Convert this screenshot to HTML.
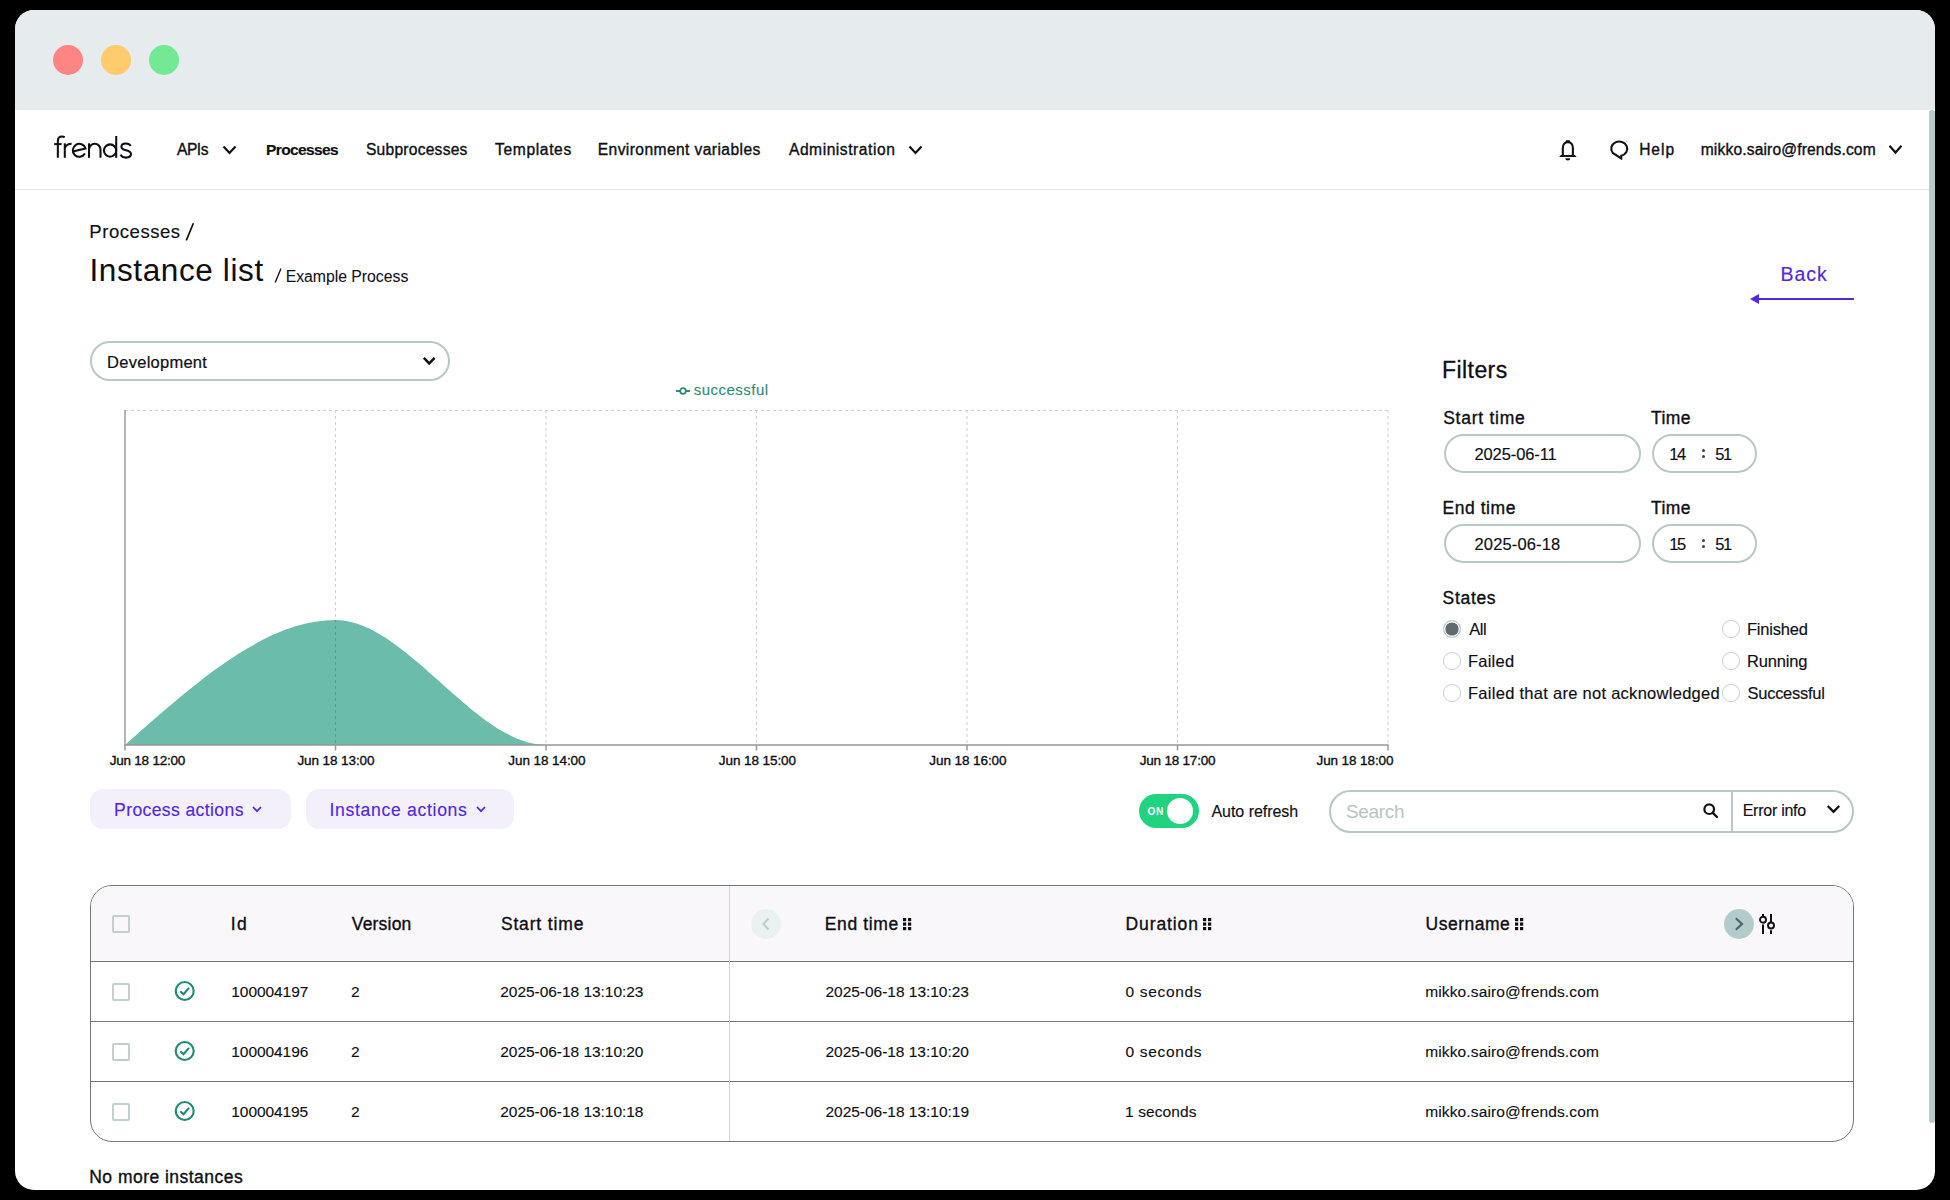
<!DOCTYPE html>
<html><head><meta charset="utf-8"><title>Instance list</title>
<style>
html,body{margin:0;padding:0;}
body{width:1950px;height:1200px;background:#000;position:relative;overflow:hidden;font-family:"Liberation Sans",sans-serif;}
.t{position:absolute;white-space:nowrap;line-height:1;}
.b{position:absolute;box-sizing:border-box;}
svg{position:absolute;overflow:visible;}
#win{position:absolute;left:15px;top:10px;width:1920px;height:1180px;border-radius:19px;overflow:hidden;background:#fff;}
</style></head><body>
<div id="win"></div>
<div class="b" style="left:15px;top:10px;width:1920px;height:100px;background:#e6ebee;border-radius:19px 19px 0 0;"></div>
<div class="b" style="left:53px;top:45px;width:30px;height:30px;background:#ff8585;border-radius:50%;"></div>
<div class="b" style="left:101px;top:45px;width:30px;height:30px;background:#ffcb6b;border-radius:50%;"></div>
<div class="b" style="left:149px;top:45px;width:30px;height:30px;background:#74e994;border-radius:50%;"></div>
<div class="b" style="left:15px;top:189px;width:1914px;height:1px;background:#e1e6e7;"></div>
<div class="b" style="left:1929px;top:110px;width:6px;height:1013px;background:#b3cbca;border-radius:3px;"></div>
<svg style="left:50px;top:130px" width="90" height="32" viewBox="0 0 90 32"><g fill="none" stroke="#0e0e14" stroke-width="2.05"><path d="M7.85 27.8 L7.85 11 C7.85 8 9.6 6.5 12 6.5 C13.1 6.5 14 6.8 14.7 7.4"/><path d="M4.2 14.1 L11.6 14.1"/><path d="M14.8 13.3 L14.8 27.8"/><path d="M14.8 18 C15.9 15.2 18.4 13.7 21.6 13.7"/><path d="M22.75 21.6 L35.5 18.4 A6.5 6.5 0 1 0 34.9 23.6"/><path d="M39 27.8 L39 13.3"/><path d="M39 19.5 A5.75 5.75 0 0 1 50.5 19.5 L50.5 27.8"/><circle cx="60.1" cy="20.5" r="6.15"/><path d="M66.2 6 L66.2 27.8"/><path d="M80.7 15.9 C79.9 14.3 78.2 13.4 75.9 13.4 C73.1 13.4 71.4 14.8 71.4 16.7 C71.4 18.9 73.6 19.6 76 20.2 C79 20.9 81 21.9 81 24.1 C81 26.3 78.8 27.6 75.9 27.6 C73.3 27.6 71.4 26.6 70.6 24.7"/></g></svg>
<div class="t" style="left:176.94px;top:141.99px;font-size:15.6px;color:#0e0e14;-webkit-text-stroke:0.35px #0e0e14;letter-spacing:-0.458px;">APIs</div>
<svg style="left:222px;top:145px" width="16" height="10" viewBox="0 0 16 10"><polyline points="1.5,1.5 7.5,8 13.5,1.5" fill="none" stroke="#111" stroke-width="2.2"/></svg>
<div class="t" style="left:266.00px;top:142.08px;font-size:15.5px;color:#0e0e14;font-weight:700;-webkit-text-stroke:0.15px #0e0e14;letter-spacing:-0.617px;">Processes</div>
<div class="t" style="left:365.91px;top:141.99px;font-size:15.6px;color:#0e0e14;-webkit-text-stroke:0.35px #0e0e14;letter-spacing:0.241px;">Subprocesses</div>
<div class="t" style="left:495.02px;top:141.99px;font-size:15.6px;color:#0e0e14;-webkit-text-stroke:0.35px #0e0e14;letter-spacing:0.644px;">Templates</div>
<div class="t" style="left:597.75px;top:141.99px;font-size:15.6px;color:#0e0e14;-webkit-text-stroke:0.35px #0e0e14;letter-spacing:0.412px;">Environment variables</div>
<div class="t" style="left:788.94px;top:141.99px;font-size:15.6px;color:#0e0e14;-webkit-text-stroke:0.35px #0e0e14;letter-spacing:0.543px;">Administration</div>
<svg style="left:908px;top:145px" width="16" height="10" viewBox="0 0 16 10"><polyline points="1.5,1.5 7.5,8 13.5,1.5" fill="none" stroke="#111" stroke-width="2.2"/></svg>
<svg style="left:1558px;top:139px" width="20" height="22" viewBox="0 0 20 22"><rect x="7.9" y="1.2" width="3.9" height="2.8" fill="#111"/><path d="M4.8 16.2 L4.8 9.2 C4.8 5.1 6.9 3.1 9.85 3.1 C12.8 3.1 14.9 5.1 14.9 9.2 L14.9 16.2" fill="none" stroke="#111" stroke-width="2.1"/><polygon points="1.2,17.9 18.6,17.9 17,16 2.8,16" fill="#111"/><path d="M7.3 19.3 L12.3 19.3 A2.5 2.3 0 0 1 7.3 19.3 Z" fill="#111"/></svg>
<svg style="left:1609px;top:140px" width="22" height="20" viewBox="0 0 22 20"><path d="M3.7 12.9 A8 7.2 0 1 1 12.3 15.7 L12.2 18.4 Z" fill="none" stroke="#111" stroke-width="2.1" stroke-linejoin="miter"/></svg>
<div class="t" style="left:1639.15px;top:141.99px;font-size:15.6px;color:#0e0e14;-webkit-text-stroke:0.35px #0e0e14;letter-spacing:0.950px;">Help</div>
<div class="t" style="left:1700.74px;top:141.99px;font-size:15.6px;color:#0e0e14;-webkit-text-stroke:0.35px #0e0e14;letter-spacing:0.149px;">mikko.sairo@frends.com</div>
<svg style="left:1888px;top:144px" width="16" height="11" viewBox="0 0 16 11"><polyline points="1.5,1.8 7.5,8.5 13.5,1.8" fill="none" stroke="#111" stroke-width="2.2"/></svg>
<div class="t" style="left:89.30px;top:223.34px;font-size:18.5px;color:#0e0e14;-webkit-text-stroke:0.15px #0e0e14;letter-spacing:0.552px;">Processes</div>
<svg style="left:180px;top:220px" width="20" height="24" viewBox="0 0 20 24"><line x1="6.3" y1="20.4" x2="13.4" y2="3.2" stroke="#111" stroke-width="1.7"/></svg>
<div class="t" style="left:89.42px;top:254.94px;font-size:31.5px;color:#0e0e14;-webkit-text-stroke:0.05px #0e0e14;letter-spacing:0.618px;">Instance list</div>
<svg style="left:270px;top:265px" width="16" height="20" viewBox="0 0 16 20"><line x1="5.2" y1="17.6" x2="11" y2="3.4" stroke="#16161c" stroke-width="1.35"/></svg>
<div class="t" style="left:285.69px;top:268.63px;font-size:15.8px;color:#0e0e14;-webkit-text-stroke:0.05px #0e0e14;letter-spacing:-0.023px;">Example Process</div>
<div class="t" style="left:1780.44px;top:265.19px;font-size:19.5px;color:#5327dd;-webkit-text-stroke:0.15px #5327dd;letter-spacing:0.963px;">Back</div>
<svg style="left:1749px;top:293px" width="107" height="12" viewBox="0 0 107 12"><path d="M9 6 L105 6" stroke="#5327dd" stroke-width="2.2"/><path d="M1 6 L10 1 L10 11 Z" fill="#5327dd"/></svg>
<div class="b" style="left:90px;top:341px;width:360px;height:40px;border:2px solid #b9c8c6;border-radius:20px;"></div>
<div class="t" style="left:107.12px;top:354.23px;font-size:16.5px;color:#0e0e14;-webkit-text-stroke:0.2px #0e0e14;letter-spacing:0.255px;">Development</div>
<svg style="left:422px;top:356px" width="15" height="10" viewBox="0 0 15 10"><polyline points="1.8,1.8 7.2,7.4 12.6,1.8" fill="none" stroke="#111" stroke-width="2.4"/></svg>
<svg style="left:0;top:0" width="1950" height="1200" viewBox="0 0 1950 1200"><line x1="125" y1="410.5" x2="1388" y2="410.5" stroke="#cfcfcf" stroke-width="1" stroke-dasharray="3 3"/><line x1="335.5" y1="410" x2="335.5" y2="745" stroke="#cfcfcf" stroke-width="1" stroke-dasharray="3 3"/><line x1="546" y1="410" x2="546" y2="745" stroke="#cfcfcf" stroke-width="1" stroke-dasharray="3 3"/><line x1="756.5" y1="410" x2="756.5" y2="745" stroke="#cfcfcf" stroke-width="1" stroke-dasharray="3 3"/><line x1="967" y1="410" x2="967" y2="745" stroke="#cfcfcf" stroke-width="1" stroke-dasharray="3 3"/><line x1="1177.5" y1="410" x2="1177.5" y2="745" stroke="#cfcfcf" stroke-width="1" stroke-dasharray="3 3"/><line x1="1388" y1="410" x2="1388" y2="745" stroke="#cfcfcf" stroke-width="1" stroke-dasharray="3 3"/><path d="M125,745 C195.17,682.50 265.33,620 335.5,620 C405.67,620 475.83,745 546,745 L125,745 Z" fill="#6bbcaa"/><line x1="335.5" y1="620" x2="335.5" y2="745" stroke="#5a9e8f" stroke-width="1" stroke-dasharray="3 3"/><line x1="125" y1="410" x2="125" y2="745" stroke="#959595" stroke-width="1.4"/><line x1="124.5" y1="745" x2="1388.5" y2="745" stroke="#959595" stroke-width="1.4"/><line x1="125" y1="745" x2="125" y2="750.5" stroke="#9a9a9a" stroke-width="1.5"/><line x1="335.5" y1="745" x2="335.5" y2="750.5" stroke="#9a9a9a" stroke-width="1.5"/><line x1="546" y1="745" x2="546" y2="750.5" stroke="#9a9a9a" stroke-width="1.5"/><line x1="756.5" y1="745" x2="756.5" y2="750.5" stroke="#9a9a9a" stroke-width="1.5"/><line x1="967" y1="745" x2="967" y2="750.5" stroke="#9a9a9a" stroke-width="1.5"/><line x1="1177.5" y1="745" x2="1177.5" y2="750.5" stroke="#9a9a9a" stroke-width="1.5"/><line x1="1388" y1="745" x2="1388" y2="750.5" stroke="#9a9a9a" stroke-width="1.5"/></svg>
<svg style="left:675px;top:386px" width="16" height="10" viewBox="0 0 16 10"><line x1="1" y1="5" x2="15" y2="5" stroke="#2a8c76" stroke-width="2"/><circle cx="8" cy="5" r="2.8" fill="#fff" stroke="#2a8c76" stroke-width="1.8"/></svg>
<div class="t" style="left:693.86px;top:381.80px;font-size:15px;color:#2a8c76;-webkit-text-stroke:0.1px #2a8c76;letter-spacing:0.460px;">successful</div>
<div class="t" style="left:109.81px;top:754.27px;font-size:13.5px;color:#0e0e14;-webkit-text-stroke:0.35px #0e0e14;letter-spacing:-0.243px;">Jun 18 12:00</div>
<div class="t" style="left:297.41px;top:754.27px;font-size:13.5px;color:#0e0e14;-webkit-text-stroke:0.35px #0e0e14;letter-spacing:-0.089px;">Jun 18 13:00</div>
<div class="t" style="left:508.31px;top:754.27px;font-size:13.5px;color:#0e0e14;-webkit-text-stroke:0.35px #0e0e14;letter-spacing:-0.080px;">Jun 18 14:00</div>
<div class="t" style="left:718.81px;top:754.27px;font-size:13.5px;color:#0e0e14;-webkit-text-stroke:0.35px #0e0e14;letter-spacing:-0.080px;">Jun 18 15:00</div>
<div class="t" style="left:929.31px;top:754.27px;font-size:13.5px;color:#0e0e14;-webkit-text-stroke:0.35px #0e0e14;letter-spacing:-0.080px;">Jun 18 16:00</div>
<div class="t" style="left:1139.81px;top:754.27px;font-size:13.5px;color:#0e0e14;-webkit-text-stroke:0.35px #0e0e14;letter-spacing:-0.216px;">Jun 18 17:00</div>
<div class="t" style="left:1316.51px;top:754.27px;font-size:13.5px;color:#0e0e14;-webkit-text-stroke:0.35px #0e0e14;letter-spacing:-0.098px;">Jun 18 18:00</div>
<div class="t" style="left:1442.12px;top:358.53px;font-size:23px;color:#0e0e14;-webkit-text-stroke:0.3px #0e0e14;letter-spacing:0.410px;">Filters</div>
<div class="t" style="left:1443.19px;top:410.29px;font-size:17.5px;color:#0e0e14;-webkit-text-stroke:0.35px #0e0e14;letter-spacing:0.750px;">Start time</div>
<div class="t" style="left:1651.03px;top:410.29px;font-size:17.5px;color:#0e0e14;-webkit-text-stroke:0.35px #0e0e14;letter-spacing:0.446px;">Time</div>
<div class="b" style="left:1443.5px;top:433.5px;width:197.5px;height:39.5px;border:2px solid #b9c8c6;border-radius:20px;"></div>
<div class="b" style="left:1651.5px;top:433.5px;width:105px;height:39.5px;border:2px solid #b9c8c6;border-radius:20px;"></div>
<div class="t" style="left:1474.49px;top:446.03px;font-size:16.5px;color:#0e0e14;-webkit-text-stroke:0.15px #0e0e14;letter-spacing:-0.107px;">2025-06-11</div>
<div class="t" style="left:1669.35px;top:446.03px;font-size:16.5px;color:#0e0e14;-webkit-text-stroke:0.15px #0e0e14;letter-spacing:-1.500px;">14</div>
<div class="b" style="left:1702.3px;top:448.8px;width:3px;height:3px;background:#3f4343;border-radius:50%;"></div>
<div class="b" style="left:1702.3px;top:455.2px;width:3px;height:3px;background:#3f4343;border-radius:50%;"></div>
<div class="t" style="left:1715.31px;top:446.03px;font-size:16.5px;color:#0e0e14;-webkit-text-stroke:0.15px #0e0e14;letter-spacing:-1.500px;">51</div>
<div class="t" style="left:1442.56px;top:500.29px;font-size:17.5px;color:#0e0e14;-webkit-text-stroke:0.35px #0e0e14;letter-spacing:0.541px;">End time</div>
<div class="t" style="left:1651.03px;top:500.29px;font-size:17.5px;color:#0e0e14;-webkit-text-stroke:0.35px #0e0e14;letter-spacing:0.446px;">Time</div>
<div class="b" style="left:1443.5px;top:523.5px;width:197.5px;height:39.5px;border:2px solid #b9c8c6;border-radius:20px;"></div>
<div class="b" style="left:1651.5px;top:523.5px;width:105px;height:39.5px;border:2px solid #b9c8c6;border-radius:20px;"></div>
<div class="t" style="left:1474.49px;top:536.03px;font-size:16.5px;color:#0e0e14;-webkit-text-stroke:0.15px #0e0e14;letter-spacing:0.147px;">2025-06-18</div>
<div class="t" style="left:1669.35px;top:536.03px;font-size:16.5px;color:#0e0e14;-webkit-text-stroke:0.15px #0e0e14;letter-spacing:-1.500px;">15</div>
<div class="b" style="left:1702.3px;top:538.8px;width:3px;height:3px;background:#3f4343;border-radius:50%;"></div>
<div class="b" style="left:1702.3px;top:545.2px;width:3px;height:3px;background:#3f4343;border-radius:50%;"></div>
<div class="t" style="left:1715.31px;top:536.03px;font-size:16.5px;color:#0e0e14;-webkit-text-stroke:0.15px #0e0e14;letter-spacing:-1.500px;">51</div>
<div class="t" style="left:1442.59px;top:590.29px;font-size:17.5px;color:#0e0e14;-webkit-text-stroke:0.35px #0e0e14;letter-spacing:0.682px;">States</div>
<div class="b" style="left:1443.2px;top:620.2px;width:17.6px;height:17.6px;border:1.7px solid #c2d0cf;border-radius:50%;background:#5f6b6d;box-shadow:inset 0 0 0 1.4px #fff;"></div>
<div class="t" style="left:1469.34px;top:621.23px;font-size:16.5px;color:#0e0e14;-webkit-text-stroke:0.15px #0e0e14;letter-spacing:-0.494px;">All</div>
<div class="b" style="left:1443.2px;top:652.2px;width:17.6px;height:17.6px;border:1.7px solid #c2d0cf;border-radius:50%;"></div>
<div class="t" style="left:1468.03px;top:653.23px;font-size:16.5px;color:#0e0e14;-webkit-text-stroke:0.15px #0e0e14;letter-spacing:0.220px;">Failed</div>
<div class="b" style="left:1443.2px;top:684.2px;width:17.6px;height:17.6px;border:1.7px solid #c2d0cf;border-radius:50%;"></div>
<div class="t" style="left:1468.03px;top:685.23px;font-size:16.5px;color:#0e0e14;-webkit-text-stroke:0.15px #0e0e14;letter-spacing:0.277px;">Failed that are not acknowledged</div>
<div class="b" style="left:1722.2px;top:620.2px;width:17.6px;height:17.6px;border:1.7px solid #c2d0cf;border-radius:50%;"></div>
<div class="t" style="left:1746.92px;top:621.23px;font-size:16.5px;color:#0e0e14;-webkit-text-stroke:0.15px #0e0e14;letter-spacing:-0.177px;">Finished</div>
<div class="b" style="left:1722.2px;top:652.2px;width:17.6px;height:17.6px;border:1.7px solid #c2d0cf;border-radius:50%;"></div>
<div class="t" style="left:1746.92px;top:653.23px;font-size:16.5px;color:#0e0e14;-webkit-text-stroke:0.15px #0e0e14;letter-spacing:-0.144px;">Running</div>
<div class="b" style="left:1722.2px;top:684.2px;width:17.6px;height:17.6px;border:1.7px solid #c2d0cf;border-radius:50%;"></div>
<div class="t" style="left:1747.55px;top:685.23px;font-size:16.5px;color:#0e0e14;-webkit-text-stroke:0.15px #0e0e14;letter-spacing:-0.282px;">Successful</div>
<div class="b" style="left:90px;top:789px;width:201px;height:40px;background:#f3f0fc;border-radius:13px;"></div>
<div class="t" style="left:114.06px;top:801.70px;font-size:17.6px;color:#5327dd;-webkit-text-stroke:0.15px #5327dd;letter-spacing:0.371px;">Process actions</div>
<svg style="left:251px;top:805px" width="12" height="9" viewBox="0 0 12 9"><polyline points="2,2 6,6.2 10,2" fill="none" stroke="#5327dd" stroke-width="1.8"/></svg>
<div class="b" style="left:306px;top:789px;width:208px;height:40px;background:#f3f0fc;border-radius:13px;"></div>
<div class="t" style="left:329.38px;top:801.70px;font-size:17.6px;color:#5327dd;-webkit-text-stroke:0.15px #5327dd;letter-spacing:0.692px;">Instance actions</div>
<svg style="left:475px;top:805px" width="12" height="9" viewBox="0 0 12 9"><polyline points="2,2 6,6.2 10,2" fill="none" stroke="#5327dd" stroke-width="1.8"/></svg>
<div class="b" style="left:1139px;top:794px;width:60px;height:34px;background:#21d37e;border-radius:17px;"></div>
<div class="b" style="left:1167px;top:798px;width:26px;height:26px;background:#fff;border-radius:50%;"></div>
<div class="t" style="left:1147.62px;top:807.24px;font-size:10px;color:#ffffff;font-weight:700;letter-spacing:0.662px;">ON</div>
<div class="t" style="left:1211.44px;top:804.26px;font-size:16px;color:#0e0e14;-webkit-text-stroke:0.15px #0e0e14;letter-spacing:-0.033px;">Auto refresh</div>
<div class="b" style="left:1328.5px;top:790px;width:525px;height:42.5px;border:2px solid #b9c8c6;border-radius:22px;"></div>
<div class="b" style="left:1731px;top:791px;width:2px;height:40.5px;background:#b9c8c6;"></div>
<div class="t" style="left:1345.92px;top:802.12px;font-size:19px;color:#b7c4c2;letter-spacing:-0.332px;">Search</div>
<svg style="left:1702px;top:802px" width="18" height="18" viewBox="0 0 18 18"><circle cx="7.2" cy="7.2" r="4.8" fill="none" stroke="#111" stroke-width="2.2"/><line x1="10.8" y1="10.8" x2="15" y2="15" stroke="#111" stroke-width="2.4" stroke-linecap="round"/></svg>
<div class="t" style="left:1742.69px;top:802.76px;font-size:16px;color:#0e0e14;-webkit-text-stroke:0.15px #0e0e14;letter-spacing:-0.257px;">Error info</div>
<svg style="left:1826px;top:804px" width="15" height="11" viewBox="0 0 15 11"><polyline points="1.8,2 7.5,7.8 13.2,2" fill="none" stroke="#111" stroke-width="2.4"/></svg>
<div class="b" style="left:90px;top:885px;width:1764px;height:257px;border:1px solid #70777a;border-radius:22px;overflow:hidden;"></div>
<div class="b" style="left:91px;top:886px;width:1762px;height:75px;background:#f9f7fa;border-radius:21px 21px 0 0;"></div>
<div class="b" style="left:91px;top:961px;width:1762px;height:1px;background:#70777a;"></div>
<div class="b" style="left:91px;top:1021px;width:1762px;height:1px;background:#70777a;"></div>
<div class="b" style="left:91px;top:1081px;width:1762px;height:1px;background:#70777a;"></div>
<div class="b" style="left:729px;top:886px;width:1px;height:255px;background:#d3d5d6;"></div>
<div class="b" style="left:112px;top:915px;width:18px;height:18px;border:2px solid #c3cfce;border-radius:2px;"></div>
<div class="t" style="left:230.68px;top:915.99px;font-size:17.5px;color:#0e0e14;-webkit-text-stroke:0.35px #0e0e14;letter-spacing:1.500px;">Id</div>
<div class="t" style="left:351.74px;top:915.99px;font-size:17.5px;color:#0e0e14;-webkit-text-stroke:0.35px #0e0e14;letter-spacing:0.202px;">Version</div>
<div class="t" style="left:500.89px;top:915.99px;font-size:17.5px;color:#0e0e14;-webkit-text-stroke:0.35px #0e0e14;letter-spacing:0.850px;">Start time</div>
<div class="b" style="left:751px;top:909px;width:30px;height:30px;background:#eaf2f1;border-radius:50%;"></div>
<svg style="left:760px;top:917px" width="12" height="14" viewBox="0 0 12 14"><polyline points="8.5,1.5 3.5,7 8.5,12.5" fill="none" stroke="#b9cdcb" stroke-width="2"/></svg>
<div class="t" style="left:824.76px;top:915.99px;font-size:17.5px;color:#0e0e14;-webkit-text-stroke:0.35px #0e0e14;letter-spacing:0.641px;">End time</div>
<div class="t" style="left:1125.46px;top:915.99px;font-size:17.5px;color:#0e0e14;-webkit-text-stroke:0.35px #0e0e14;letter-spacing:0.911px;">Duration</div>
<div class="t" style="left:1425.53px;top:915.99px;font-size:17.5px;color:#0e0e14;-webkit-text-stroke:0.35px #0e0e14;letter-spacing:0.505px;">Username</div>
<svg style="left:902.5px;top:918.2px" width="8.5" height="12.5" viewBox="0 0 8.5 12.5"><rect x="0" y="0" width="3.2" height="3.2" fill="#111"/><rect x="0" y="4.5" width="3.2" height="3.2" fill="#111"/><rect x="0" y="9" width="3.2" height="3.2" fill="#111"/><rect x="5" y="0" width="3.2" height="3.2" fill="#111"/><rect x="5" y="4.5" width="3.2" height="3.2" fill="#111"/><rect x="5" y="9" width="3.2" height="3.2" fill="#111"/></svg>
<svg style="left:1203px;top:918.2px" width="8.5" height="12.5" viewBox="0 0 8.5 12.5"><rect x="0" y="0" width="3.2" height="3.2" fill="#111"/><rect x="0" y="4.5" width="3.2" height="3.2" fill="#111"/><rect x="0" y="9" width="3.2" height="3.2" fill="#111"/><rect x="5" y="0" width="3.2" height="3.2" fill="#111"/><rect x="5" y="4.5" width="3.2" height="3.2" fill="#111"/><rect x="5" y="9" width="3.2" height="3.2" fill="#111"/></svg>
<svg style="left:1514.6px;top:918.2px" width="8.5" height="12.5" viewBox="0 0 8.5 12.5"><rect x="0" y="0" width="3.2" height="3.2" fill="#111"/><rect x="0" y="4.5" width="3.2" height="3.2" fill="#111"/><rect x="0" y="9" width="3.2" height="3.2" fill="#111"/><rect x="5" y="0" width="3.2" height="3.2" fill="#111"/><rect x="5" y="4.5" width="3.2" height="3.2" fill="#111"/><rect x="5" y="9" width="3.2" height="3.2" fill="#111"/></svg>
<div class="b" style="left:1723.8px;top:909px;width:30px;height:30px;background:#b3cccb;border-radius:50%;"></div>
<svg style="left:1733px;top:916px" width="12" height="16" viewBox="0 0 12 16"><polyline points="2.8,2.2 9,8 2.8,13.8" fill="none" stroke="#4c6665" stroke-width="2.2"/></svg>
<svg style="left:1757px;top:912px" width="22" height="24" viewBox="0 0 22 24"><line x1="6" y1="2" x2="6" y2="4.6" stroke="#111" stroke-width="2"/><circle cx="6" cy="7.7" r="3" fill="none" stroke="#111" stroke-width="1.9"/><line x1="6" y1="12.6" x2="6" y2="22" stroke="#111" stroke-width="2"/><line x1="14" y1="2" x2="14" y2="10.4" stroke="#111" stroke-width="2"/><circle cx="14" cy="13.5" r="3" fill="none" stroke="#111" stroke-width="1.9"/><line x1="14" y1="18.3" x2="14" y2="22" stroke="#111" stroke-width="2"/></svg>
<div class="b" style="left:112px;top:983px;width:18px;height:18px;border:2px solid #c3cfce;border-radius:2px;"></div>
<svg style="left:173.5px;top:980px" width="22" height="22" viewBox="0 0 22 22"><circle cx="10.7" cy="11" r="9" fill="none" stroke="#1f8b74" stroke-width="2.1"/><polyline points="6.3,11.3 9.5,14.3 15,7.9" fill="none" stroke="#1f8b74" stroke-width="2.1"/></svg>
<div class="t" style="left:231.31px;top:983.88px;font-size:15.5px;color:#0e0e14;-webkit-text-stroke:0.12px #0e0e14;letter-spacing:-0.066px;">100004197</div>
<div class="t" style="left:351.05px;top:983.88px;font-size:15.5px;color:#0e0e14;-webkit-text-stroke:0.12px #0e0e14;">2</div>
<div class="t" style="left:500.25px;top:983.88px;font-size:15.5px;color:#0e0e14;-webkit-text-stroke:0.12px #0e0e14;letter-spacing:-0.039px;">2025-06-18 13:10:23</div>
<div class="t" style="left:825.45px;top:983.88px;font-size:15.5px;color:#0e0e14;-webkit-text-stroke:0.12px #0e0e14;letter-spacing:-0.022px;">2025-06-18 13:10:23</div>
<div class="t" style="left:1125.58px;top:983.88px;font-size:15.5px;color:#0e0e14;-webkit-text-stroke:0.12px #0e0e14;letter-spacing:0.650px;">0 seconds</div>
<div class="t" style="left:1425.20px;top:983.88px;font-size:15.5px;color:#0e0e14;-webkit-text-stroke:0.12px #0e0e14;letter-spacing:0.136px;">mikko.sairo@frends.com</div>
<div class="b" style="left:112px;top:1043px;width:18px;height:18px;border:2px solid #c3cfce;border-radius:2px;"></div>
<svg style="left:173.5px;top:1040px" width="22" height="22" viewBox="0 0 22 22"><circle cx="10.7" cy="11" r="9" fill="none" stroke="#1f8b74" stroke-width="2.1"/><polyline points="6.3,11.3 9.5,14.3 15,7.9" fill="none" stroke="#1f8b74" stroke-width="2.1"/></svg>
<div class="t" style="left:231.31px;top:1043.88px;font-size:15.5px;color:#0e0e14;-webkit-text-stroke:0.12px #0e0e14;letter-spacing:-0.073px;">100004196</div>
<div class="t" style="left:351.05px;top:1043.88px;font-size:15.5px;color:#0e0e14;-webkit-text-stroke:0.12px #0e0e14;">2</div>
<div class="t" style="left:500.25px;top:1043.88px;font-size:15.5px;color:#0e0e14;-webkit-text-stroke:0.12px #0e0e14;letter-spacing:-0.042px;">2025-06-18 13:10:20</div>
<div class="t" style="left:825.45px;top:1043.88px;font-size:15.5px;color:#0e0e14;-webkit-text-stroke:0.12px #0e0e14;letter-spacing:-0.026px;">2025-06-18 13:10:20</div>
<div class="t" style="left:1125.58px;top:1043.88px;font-size:15.5px;color:#0e0e14;-webkit-text-stroke:0.12px #0e0e14;letter-spacing:0.650px;">0 seconds</div>
<div class="t" style="left:1425.20px;top:1043.88px;font-size:15.5px;color:#0e0e14;-webkit-text-stroke:0.12px #0e0e14;letter-spacing:0.136px;">mikko.sairo@frends.com</div>
<div class="b" style="left:112px;top:1103px;width:18px;height:18px;border:2px solid #c3cfce;border-radius:2px;"></div>
<svg style="left:173.5px;top:1100px" width="22" height="22" viewBox="0 0 22 22"><circle cx="10.7" cy="11" r="9" fill="none" stroke="#1f8b74" stroke-width="2.1"/><polyline points="6.3,11.3 9.5,14.3 15,7.9" fill="none" stroke="#1f8b74" stroke-width="2.1"/></svg>
<div class="t" style="left:231.31px;top:1103.88px;font-size:15.5px;color:#0e0e14;-webkit-text-stroke:0.12px #0e0e14;letter-spacing:-0.081px;">100004195</div>
<div class="t" style="left:351.05px;top:1103.88px;font-size:15.5px;color:#0e0e14;-webkit-text-stroke:0.12px #0e0e14;">2</div>
<div class="t" style="left:500.25px;top:1103.88px;font-size:15.5px;color:#0e0e14;-webkit-text-stroke:0.12px #0e0e14;letter-spacing:-0.039px;">2025-06-18 13:10:18</div>
<div class="t" style="left:825.45px;top:1103.88px;font-size:15.5px;color:#0e0e14;-webkit-text-stroke:0.12px #0e0e14;letter-spacing:-0.019px;">2025-06-18 13:10:19</div>
<div class="t" style="left:1125.01px;top:1103.88px;font-size:15.5px;color:#0e0e14;-webkit-text-stroke:0.12px #0e0e14;letter-spacing:0.108px;">1 seconds</div>
<div class="t" style="left:1425.20px;top:1103.88px;font-size:15.5px;color:#0e0e14;-webkit-text-stroke:0.12px #0e0e14;letter-spacing:0.136px;">mikko.sairo@frends.com</div>
<div class="t" style="left:89.26px;top:1168.79px;font-size:17.5px;color:#0e0e14;-webkit-text-stroke:0.35px #0e0e14;letter-spacing:0.468px;">No more instances</div>
</body></html>
